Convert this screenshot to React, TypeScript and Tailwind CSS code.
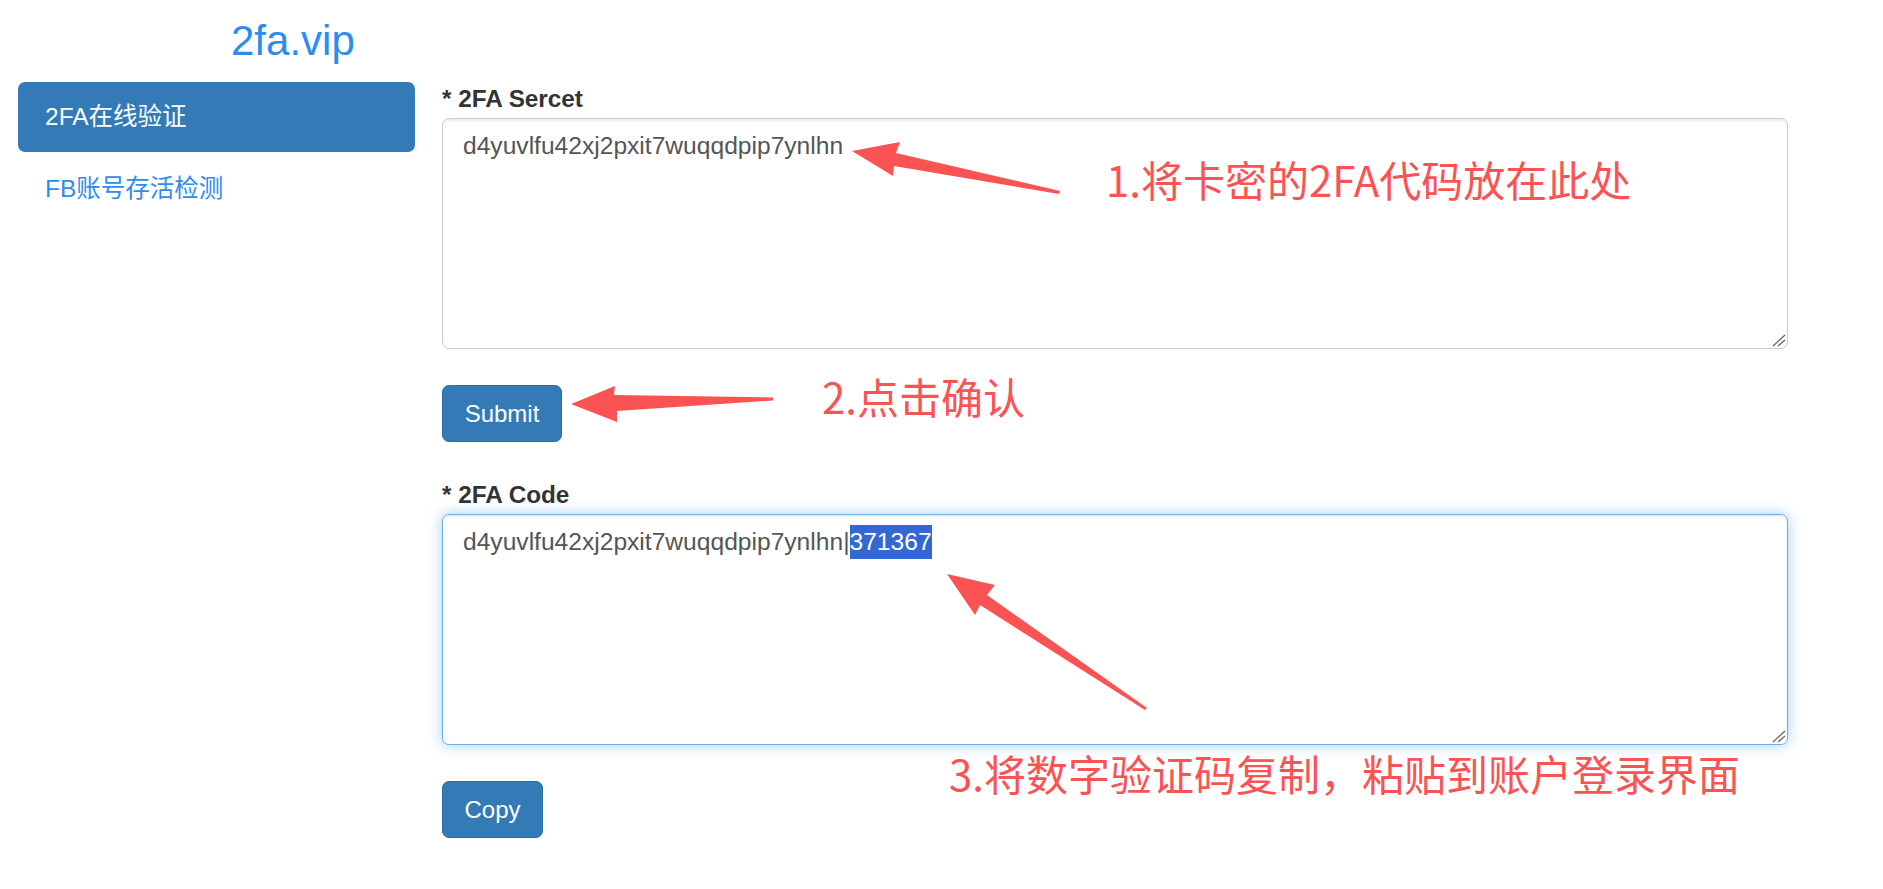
import React from "react";

/** Bottom-right resize grip drawn the way Chromium paints it on a textarea. */
function Grip() {
  return (
    <svg
      className="absolute right-[1px] bottom-[1px] w-[14px] h-[14px]"
      viewBox="0 0 14 14"
      fill="none"
      stroke="#6b6b6b"
      strokeWidth="1.4"
    >
      <path d="M1 13 L13 2" />
      <path d="M6 13 L13 7" />
    </svg>
  );
}

function Field({
  label,
  focused,
  children,
}: {
  label: string;
  focused?: boolean;
  children: React.ReactNode;
}) {
  return (
    <div className="flex flex-col">
      <label className="mb-[2px] text-[24.3px] leading-[34px] font-bold text-[#333]">* {label}</label>
      <div
        role="textbox"
        className={`relative h-[231px] rounded-[7px] border bg-white px-[20px] py-[10px] text-[24.6px] leading-[34px] text-[#555] ${
          focused
            ? "border-[#66afe9] shadow-[inset_0_2px_2px_rgba(0,0,0,0.075),0_0_14px_rgba(102,175,233,0.6)]"
            : "border-[#ccc] shadow-[inset_0_2px_2px_rgba(0,0,0,0.075)]"
        }`}
      >
        {children}
        <Grip />
      </div>
    </div>
  );
}

function PrimaryButton({ children, width }: { children: React.ReactNode; width: string }) {
  return (
    <button
      className={`${width} h-[57px] flex items-center justify-center rounded-[7px] border border-[#2e6da4] bg-[#337ab7] text-[24px] leading-[34px] text-white`}
    >
      {children}
    </button>
  );
}

export default function App() {
  const secret = "d4yuvlfu42xj2pxit7wuqqdpip7ynlhn";

  return (
    <div className="relative h-[889px] w-full overflow-hidden bg-white font-['Liberation_Sans','Noto_Sans_CJK_SC',sans-serif]">
      {/* brand */}
      <div className="h-[82px] pl-[231px] pt-[18px]">
        <h1 className="text-[42px] leading-[46px] text-[#2d8cf0]">2fa.vip</h1>
      </div>

      <div className="flex pl-[18px]">
        {/* side nav */}
        <nav className="flex w-[397px] flex-col gap-[3px]">
          <a className="flex h-[70px] items-center rounded-[7px] bg-[#337ab7] pl-[27px] text-[24.5px] leading-[34px] text-white">
            2FA在线验证
          </a>
          <a className="flex h-[68px] items-center rounded-[7px] pl-[27px] text-[24.5px] leading-[34px] text-[#2d8cf0]">
            FB账号存活检测
          </a>
        </nav>

        {/* form */}
        <main className="ml-[27px] flex w-[1346px] flex-col">
          <Field label="2FA Sercet">{secret}</Field>
          <div className="mt-[36px]">
            <PrimaryButton width="w-[120px]">Submit</PrimaryButton>
          </div>
          <div className="mt-[36px]">
            <Field label="2FA Code" focused>
              {secret}|
              <span className="inline-block h-[34px] align-top bg-[#3367d3] text-white">371367</span>
            </Field>
          </div>
          <div className="mt-[36px]">
            <PrimaryButton width="w-[101px]">Copy</PrimaryButton>
          </div>
        </main>
      </div>

      {/* annotation arrows laid over the form */}
      <svg
        className="pointer-events-none absolute left-0 top-0 h-[889px] w-[1883px]"
        viewBox="0 0 1883 889"
        fill="#fb5353"
      >
        <polygon points="852,151 900,142 896,153 1060,191 1059,194 894,166 893,176" />
        <polygon points="571,404 615,386 614,395 773,397.5 773,400.5 617,411 617,422" />
        <polygon points="947,574 995,585 987,595 1147,708 1145,710 980,605 975,615" />
      </svg>

      <div className="pointer-events-none absolute left-[1106px] top-[158px] whitespace-nowrap text-[42px] leading-[42px] text-[#fb5353] font-['Noto_Sans_CJK_SC',sans-serif]">
        1.将卡密的2FA代码放在此处
      </div>
      <div className="pointer-events-none absolute left-[822px] top-[375px] whitespace-nowrap text-[42px] leading-[42px] text-[#fb5353] font-['Noto_Sans_CJK_SC',sans-serif]">
        2.点击确认
      </div>
      <div className="pointer-events-none absolute left-[949px] top-[752px] whitespace-nowrap text-[42px] leading-[42px] text-[#fb5353] font-['Noto_Sans_CJK_SC',sans-serif]">
        3.将数字验证码复制，粘贴到账户登录界面
      </div>
    </div>
  );
}
